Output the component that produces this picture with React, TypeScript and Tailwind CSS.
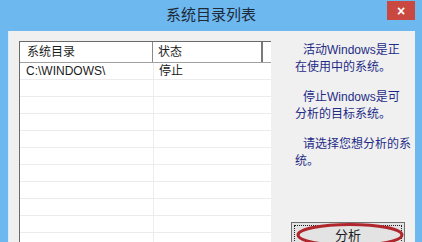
const font = { fontFamily: '"Liberation Sans", "Noto Sans CJK SC", sans-serif' };

const rows = [
  { path: "C:\\WINDOWS\\", state: "停止" },
  ...Array.from({ length: 11 }, () => ({ path: "", state: "" })),
];

const notes = [
  ["活动Windows是正", "在使用中的系统。"],
  ["停止Windows是可", "分析的目标系统。"],
  ["请选择您想分析的系", "统。"],
];

function TitleBar() {
  return (
    <div className="flex h-[31px] shrink-0">
      <div className="w-[35px]" />
      <div className="flex flex-1 items-center justify-center pb-[1px] text-[15px] text-[#1d2a3a]">
        系统目录列表
      </div>
      <div className="flex w-[35px] items-start pt-[1px]">
        <div className="flex h-[19px] w-[28px] items-center justify-center bg-[#c9483f] text-[14px] font-bold leading-none text-white">
          ×
        </div>
      </div>
    </div>
  );
}

function ListBox() {
  return (
    <div className="flex h-[210px] w-[252px] shrink-0 flex-col overflow-hidden border-l border-t border-[#6a6a6a] bg-white text-[12px] text-[#1c1c1c]">
      <div className="flex h-[21px] shrink-0 border-b border-[#a0a0a0]">
        <div className="flex w-[133px] items-center border-r border-[#8a8a8a] pl-[7px]">系统目录</div>
        <div className="flex w-[110px] items-center border-r-2 border-[#7a7a7a] pl-[5px]">状态</div>
        <div className="flex-1" />
      </div>
      {rows.map((r, i) => (
        <div key={i} className="flex h-[17px] shrink-0 border-b border-[#ececec]">
          <div className="flex w-[134px] items-center border-r border-[#ededed] pl-[6px]">{r.path}</div>
          <div className="flex items-center pl-[5px]">{r.state}</div>
        </div>
      ))}
    </div>
  );
}

export default function App() {
  return (
    <div className="flex h-[242px] w-[422px] flex-col overflow-hidden bg-[#6db8ee]" style={font}>
      <TitleBar />
      <div className="ml-[8px] mr-[7px] flex h-[211px] shrink-0 overflow-hidden border-l border-[#d6ebf8] bg-[#f0f0f0] pl-[10px] pt-[10px]">
        <ListBox />
        <div className="flex flex-1 flex-col">
          <div className="flex flex-col gap-[13px] pl-[24px] pt-[1px] text-[12px] leading-[17px] text-[#1f2c86]">
            {notes.map(([a, b], i) => (
              <div key={i} className="flex flex-col">
                <span className="pl-[8px]">{a}</span>
                <span>{b}</span>
              </div>
            ))}
          </div>
          <div className="relative ml-[20px] mt-[52px] h-[26px] w-[114px] shrink-0 border border-[#707070] bg-[#e3e3e3] p-[2px]">
            <div className="flex h-full items-start justify-center border border-dotted border-[#222] pt-[1px] text-[13px] leading-[17px] text-[#1c1c1c]">
              分析
            </div>
            <svg className="absolute left-[3px] top-[-1px]" width="110" height="26" viewBox="0 0 110 26">
              <ellipse cx="55" cy="13" rx="52" ry="10.5" fill="none" stroke="#b0262c" strokeWidth="3" />
            </svg>
          </div>
        </div>
      </div>
    </div>
  );
}
